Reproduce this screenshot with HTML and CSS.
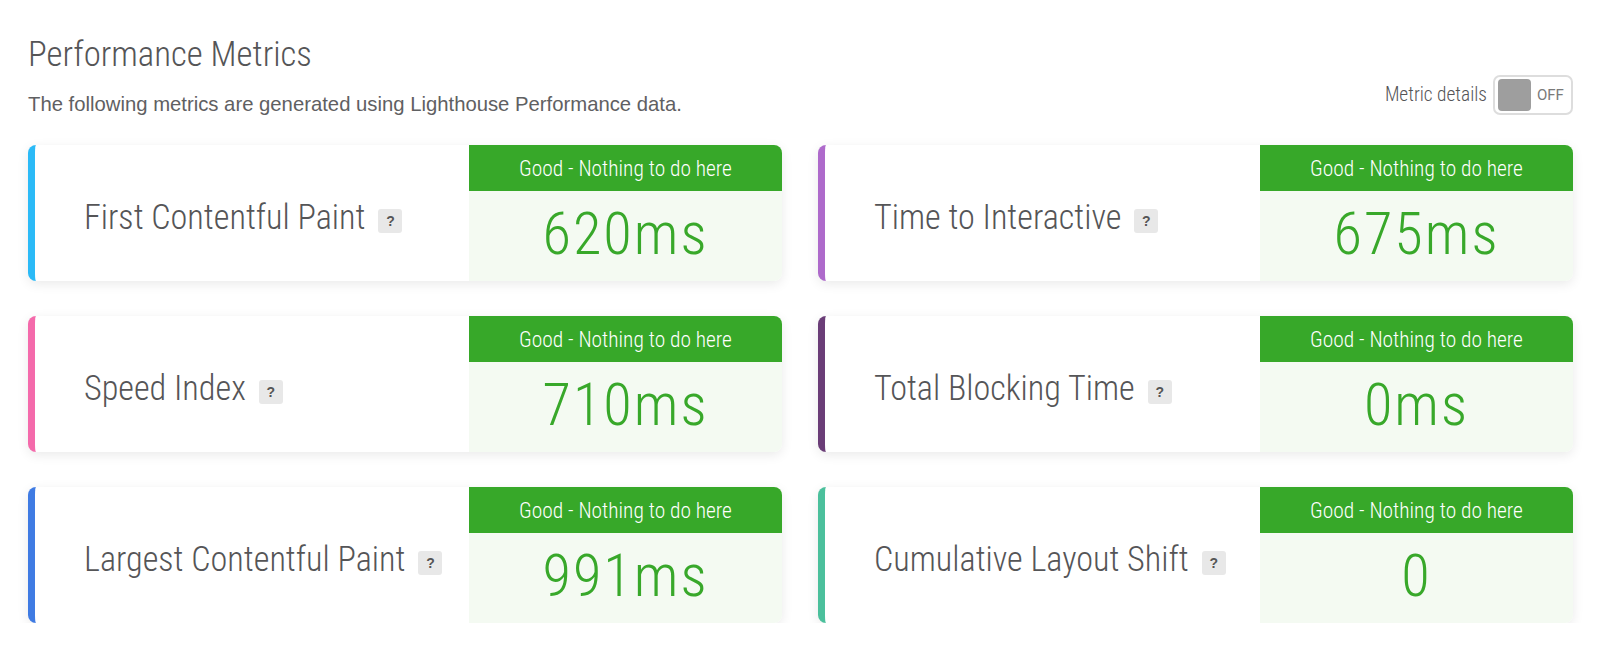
FILE: index.html
```html
<!DOCTYPE html>
<html lang="en">
<head>
<meta charset="utf-8">
<title>Performance Metrics</title>
<link rel="stylesheet" href="styles.css">
</head>
<body>
<div class="page">
  <div class="head">
    <div class="head-text">
      <h2 class="title">Performance Metrics</h2>
      <p class="subtitle">The following metrics are generated using Lighthouse Performance data.</p>
    </div>
    <div class="details">
      <span class="details-label">Metric details</span>
      <span class="toggle"><span class="knob"></span><span class="toggle-text">OFF</span></span>
    </div>
  </div>

  <div class="grid">
    <div class="card stripe-fcp">
      <div class="card-name"><span class="name">First Contentful Paint</span><span class="help">?</span></div>
      <div class="card-grade"><div class="grade-head">Good - Nothing to do here</div><div class="grade-value">620ms</div></div>
    </div>
    <div class="card stripe-tti">
      <div class="card-name"><span class="name">Time to Interactive</span><span class="help">?</span></div>
      <div class="card-grade"><div class="grade-head">Good - Nothing to do here</div><div class="grade-value">675ms</div></div>
    </div>
    <div class="card stripe-si">
      <div class="card-name"><span class="name">Speed Index</span><span class="help">?</span></div>
      <div class="card-grade"><div class="grade-head">Good - Nothing to do here</div><div class="grade-value">710ms</div></div>
    </div>
    <div class="card stripe-tbt">
      <div class="card-name"><span class="name">Total Blocking Time</span><span class="help">?</span></div>
      <div class="card-grade"><div class="grade-head">Good - Nothing to do here</div><div class="grade-value">0ms</div></div>
    </div>
    <div class="card stripe-lcp">
      <div class="card-name"><span class="name">Largest Contentful Paint</span><span class="help">?</span></div>
      <div class="card-grade"><div class="grade-head">Good - Nothing to do here</div><div class="grade-value">991ms</div></div>
    </div>
    <div class="card stripe-cls">
      <div class="card-name"><span class="name">Cumulative Layout Shift</span><span class="help">?</span></div>
      <div class="card-grade"><div class="grade-head">Good - Nothing to do here</div><div class="grade-value">0</div></div>
    </div>
  </div>
</div>
</body>
</html>
```
FILE: styles.css
```css
* { box-sizing: border-box; }

body {
  margin: 0;
  background: #ffffff;
  font-family: "Roboto Condensed", "Roboto", sans-serif;
  color: #58595b;
}

.page {
  padding: 34px 27px 0 28px;
}

.head {
  display: flex;
  justify-content: space-between;
  align-items: flex-end;
}

.title {
  margin: 0;
  font-family: "Roboto Condensed", "Roboto", sans-serif;
  font-weight: 300;
  font-size: 34.8px;
  line-height: 40px;
  color: #555557;
}

.subtitle {
  margin: 18px 0 0;
  font-family: "Liberation Sans", Arial, sans-serif;
  font-size: 20.3px;
  line-height: 24px;
  color: #5f6062;
}

.details {
  display: flex;
  align-items: center;
  gap: 6px;
  margin-bottom: 1px;
}

.details-label {
  font-size: 19.4px;
  font-weight: 300;
  line-height: 24px;
  color: #555557;
}

.toggle {
  display: flex;
  align-items: center;
  width: 80px;
  height: 40px;
  padding: 0 0 0 3px;
  border: 2px solid #dddddd;
  border-radius: 7px;
  background: #ffffff;
}

.knob {
  width: 33px;
  height: 32px;
  border-radius: 4px;
  background: #9e9e9e;
}

.toggle-text {
  margin-left: 6px;
  font-family: "Roboto", sans-serif;
  font-size: 15px;
  color: #7a7a7a;
}

.grid {
  display: grid;
  grid-template-columns: 754px 755px;
  column-gap: 36px;
  row-gap: 35px;
  margin-top: 29px;
}

.card {
  display: flex;
  height: 136px;
  border-left: 7px solid #29b6f6;
  border-radius: 8px;
  background: #ffffff;
  overflow: hidden;
  box-shadow: 0 3px 12px rgba(0, 0, 0, 0.085);
}

.stripe-fcp { border-left-color: #2bbaf7; }
.stripe-tti { border-left-color: #ae6acb; }
.stripe-si  { border-left-color: #f46aab; }
.stripe-tbt { border-left-color: #6a3d77; }
.stripe-lcp { border-left-color: #3f7be3; }
.stripe-cls { border-left-color: #4bc09c; }

.card-name {
  flex: 1;
  display: flex;
  align-items: center;
  padding: 8px 0 0 49px;
}

.name {
  font-size: 34.2px;
  font-weight: 300;
  line-height: 40px;
  color: #555557;
}

.help {
  display: inline-flex;
  align-items: center;
  justify-content: center;
  width: 24px;
  height: 24px;
  margin: 7px 0 0 13px;
  border-radius: 3px;
  background: #e8e8e8;
  font-family: "Liberation Sans", Arial, sans-serif;
  font-weight: 700;
  font-size: 14px;
  color: #555555;
}

.card-grade {
  width: 313px;
  display: flex;
  flex-direction: column;
  background: #f4faf2;
}

.grade-head {
  height: 46px;
  display: flex;
  align-items: center;
  justify-content: center;
  background: #37a829;
  color: #ffffff;
  font-size: 21.4px;
  font-weight: 300;
}

.grade-value {
  flex: 1;
  display: flex;
  align-items: center;
  justify-content: center;
  padding-bottom: 4px;
  font-size: 58.5px;
  font-weight: 300;
  letter-spacing: 2px;
  color: #38a82a;
}
```
